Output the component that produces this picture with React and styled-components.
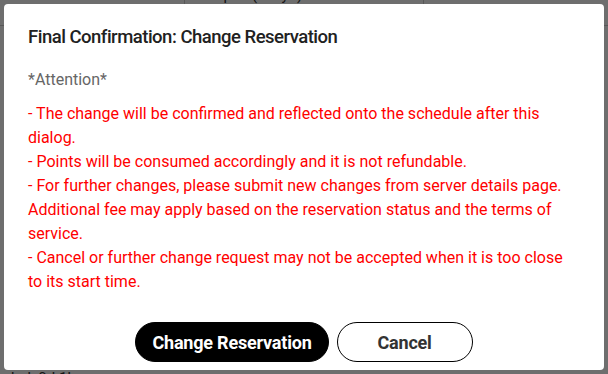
import React from "react";
import styled, { createGlobalStyle } from "styled-components";

const Global = createGlobalStyle`
  html, body { margin: 0; padding: 0; }
  body {
    font-family: Roboto, "Noto Sans", "Liberation Sans", sans-serif;
    background: #fff;
    width: 608px;
    height: 374px;
    overflow: hidden;
  }
`;

const Page = styled.div`
  height: 374px;
  overflow: hidden;
  color: #333;
  font-size: 15px;
`;

const TopRow = styled.div`
  display: grid;
  grid-template-columns: 184px 239px 1fr;
  margin-top: -15px;
  height: 40px;
  border-bottom: 1px solid #ccc;
`;

const Cell = styled.div`
  border-left: ${(p) => (p.$line ? "1px solid #ccc" : "none")};
  padding: 0 22px;
  line-height: 20px;
`;

const BottomText = styled.div`
  margin-top: 342px;
  font-size: 15px;
  line-height: 20px;
  margin-left: -31px;
`;

const Overlay = styled.div`
  position: fixed;
  inset: 0;
  background: rgba(0, 0, 0, 0.57);
  display: flex;
  align-items: flex-start;
  justify-content: center;
  padding-top: 4px;
`;

const Dialog = styled.div`
  width: 600px;
  height: 366px;
  box-sizing: border-box;
  background: #fff;
  border-radius: 4px;
  padding: 21px 24px 8px;
  display: flex;
  flex-direction: column;
`;

const Title = styled.h2`
  margin: 0;
  font-size: 18.5px;
  font-weight: 500;
  line-height: 24px;
  letter-spacing: -0.5px;
  color: #212121;
`;

const Attention = styled.p`
  margin: 19px 0 0;
  font-size: 16px;
  line-height: 24px;
  color: #666;
`;

const Notes = styled.div`
  margin-top: 10px;
  font-size: 16px;
  line-height: 24px;
  color: #ff0000;
`;

const Actions = styled.div`
  margin-top: auto;
  display: flex;
  justify-content: center;
  gap: 8px;
`;

const Button = styled.button`
  height: 40px;
  min-width: 136px;
  padding: 0 16px;
  box-sizing: border-box;
  border-radius: 20px;
  font-family: Roboto, "Liberation Sans", sans-serif;
  font-size: 18px;
  font-weight: 700;
  letter-spacing: -0.2px;
  cursor: pointer;
  border: 1px solid #000;
  background: ${(p) => (p.$primary ? "#000" : "#fff")};
  color: ${(p) => (p.$primary ? "#fff" : "#333")};
`;

export default function App() {
  return (
    <>
      <Global />
      <Page>
        <TopRow>
          <Cell>lt</Cell>
          <Cell $line>Japan (Tokyo)</Cell>
          <Cell $line>-</Cell>
        </TopRow>
        <BottomText>Extended: 0d 1h</BottomText>
      </Page>
      <Overlay>
        <Dialog role="dialog">
          <Title>Final Confirmation: Change Reservation</Title>
          <Attention>*Attention*</Attention>
          <Notes>
            - The change will be confirmed and reflected onto the schedule after this dialog.
            <br />- Points will be consumed accordingly and it is not refundable.
            <br />- For further changes, please submit new changes from server details page.
            Additional fee may apply based on the reservation status and the terms of service.
            <br />- Cancel or further change request may not be accepted when it is too close to
            its start time.
          </Notes>
          <Actions>
            <Button $primary>Change Reservation</Button>
            <Button>Cancel</Button>
          </Actions>
        </Dialog>
      </Overlay>
    </>
  );
}
